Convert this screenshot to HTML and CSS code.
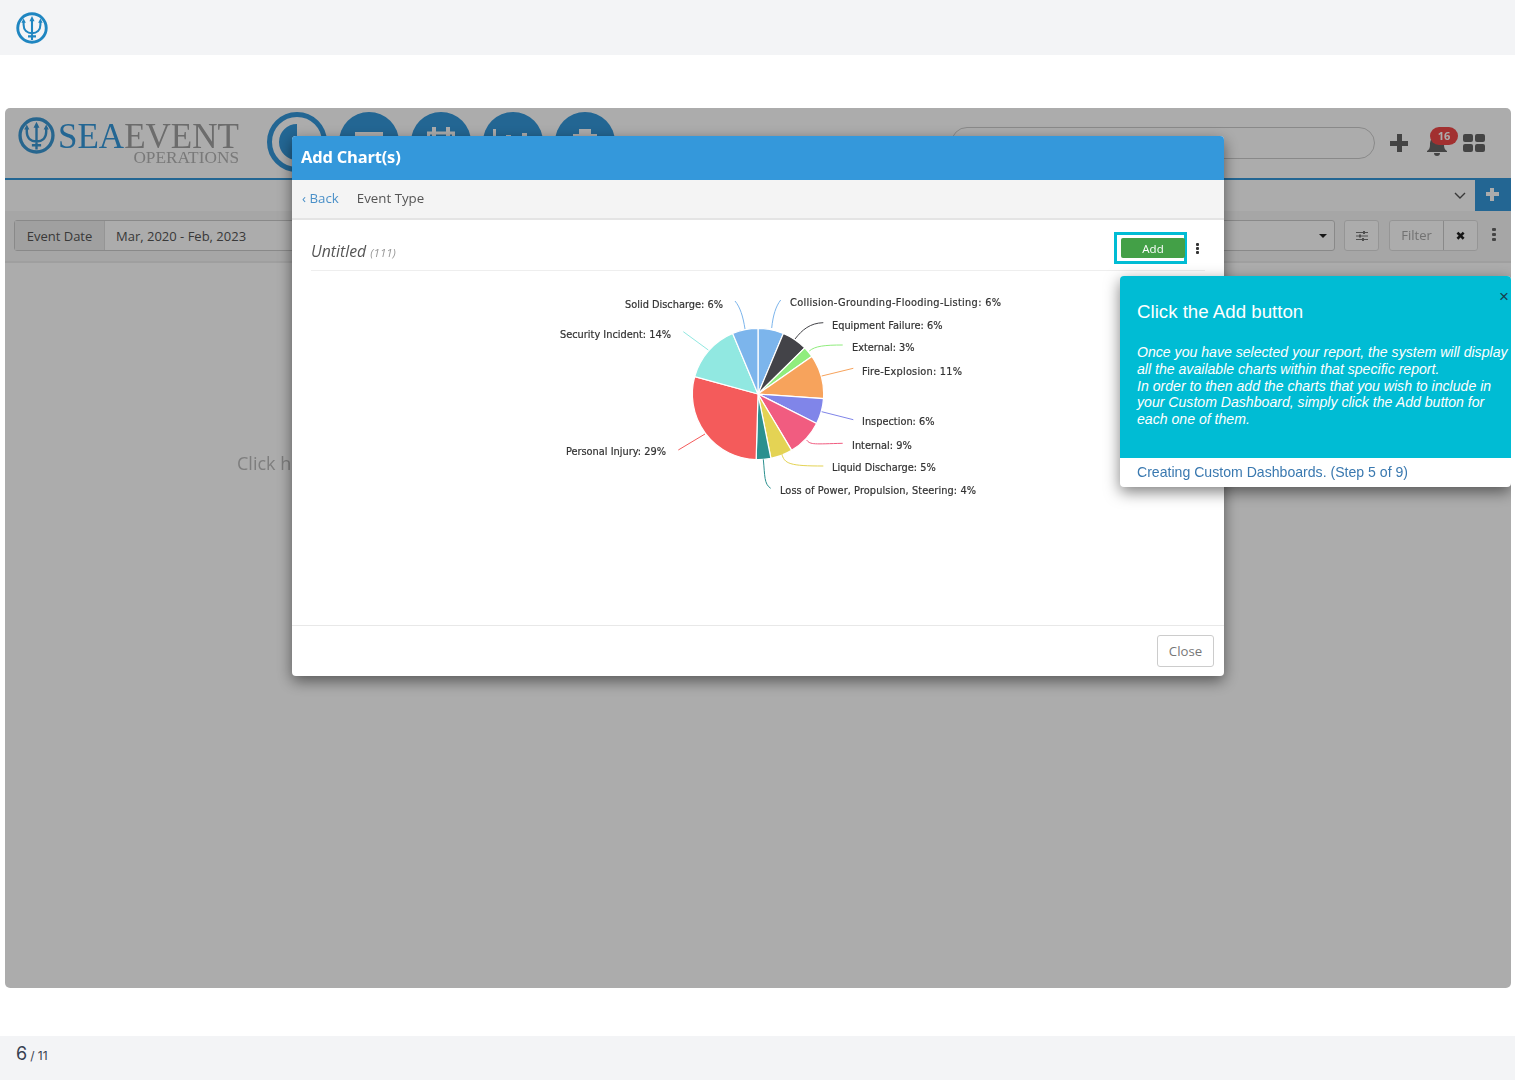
FILE: index.html
```html
<!DOCTYPE html>
<html lang="en">
<head>
    <meta charset="UTF-8">
    <meta name="viewport" content="width=device-width, initial-scale=1.0">
    <title>Creating Custom Dashboards</title>
    <link rel="stylesheet" href="styles.css">
</head>
<body>
    <svg class="defs" width="0" height="0">
        <symbol id="trident" viewBox="0 0 40 40">
            <circle cx="20" cy="20" r="17.800" fill="none" stroke="currentColor" stroke-width="3.600"/>
            <path d="M9.500 12v4c0 7 4.500 10.500 10.500 10.500S30.500 23 30.500 16v-4M20 9v26M15 30.500h10" fill="none" stroke="currentColor" stroke-width="2.600"/>
            <path d="M20 5l3.200 6.500h-6.400zM9.500 8l2.800 5.500H6.700zM30.500 8l2.800 5.500h-5.600z" fill="currentColor"/>
        </symbol>
    </svg>

    <header class="top-bar">
        <svg class="top-logo"><use href="#trident"/></svg>
    </header>

    <main class="stage">
        <div class="frame">
            <div class="app-header">
                <div class="brand">
                    <svg class="brand-mark"><use href="#trident"/></svg>
                    <div class="brand-text">
                        <div class="brand-name"><span class="sea">SEA</span>EVENT</div>
                        <div class="brand-sub">OPERATIONS</div>
                    </div>
                </div>
                <nav class="nav-icons">
                    <svg class="nav-icon" viewBox="0 0 60 60">
                        <circle cx="30" cy="30" r="27.500" fill="none" stroke="#3498db" stroke-width="5"/>
                        <path d="M30 12a18 18 0 1 0 18 18H30z" fill="#3498db"/>
                    </svg>
                    <svg class="nav-icon" viewBox="0 0 60 60">
                        <circle cx="30" cy="30" r="30" fill="#3498db"/>
                        <rect x="16" y="20" width="28" height="24" fill="#fff"/>
                    </svg>
                    <svg class="nav-icon" viewBox="0 0 60 60">
                        <circle cx="30" cy="30" r="30" fill="#3498db"/>
                        <path d="M17.500 21h25v20h-25z" fill="none" stroke="#fff" stroke-width="3"/>
                        <path d="M21 15h4v9h-4zM35 15h4v9h-4z" fill="#fff"/>
                    </svg>
                    <svg class="nav-icon" viewBox="0 0 60 60">
                        <circle cx="30" cy="30" r="30" fill="#3498db"/>
                        <path d="M10 17h3v26h-3zM23 23h5v20h-5zM39 21h5v22h-5z" fill="#fff"/>
                    </svg>
                    <svg class="nav-icon" viewBox="0 0 60 60">
                        <circle cx="30" cy="30" r="30" fill="#3498db"/>
                        <path d="M24 17h12v5h6v22H18V22h6z" fill="#fff"/>
                    </svg>
                </nav>
                <div class="header-search"></div>
                <div class="header-tools">
                    <span class="tool-plus"></span>
                    <span class="tool-bell">
                        <svg viewBox="0 0 24 24" width="24" height="24"><path d="M12 2a2 2 0 0 1 2 2c4 1 5 4 5 8 0 3 1 5 3 6v1H2v-1c2-1 3-3 3-6 0-4 1-7 5-8a2 2 0 0 1 2-2zM9 20h6a3 3 0 0 1-6 0z" fill="#666"/></svg>
                        <span class="badge">16</span>
                    </span>
                    <span class="tool-grid"><i></i><i></i><i></i><i></i></span>
                </div>
            </div>

            <div class="tab-row">
                <svg class="chevron" viewBox="0 0 12 8" width="12" height="8"><path d="M1 1l5 5 5-5" fill="none" stroke="#555" stroke-width="1.400"/></svg>
                <div class="tab-add"><span class="tab-add-plus"></span></div>
            </div>

            <div class="filter-row">
                <div class="date-group">
                    <span class="date-label">Event Date</span>
                    <span class="date-value">Mar, 2020 - Feb, 2023</span>
                    <span class="caret"></span>
                </div>
                <div class="sliders-btn">
                    <svg viewBox="0 0 12 12" width="12" height="12"><path d="M0 2.500h12M0 6h12M0 9.500h12" stroke="#777" stroke-width="1"/><path d="M7 1h2v3H7zM3 4.500h2v3H3zM6 8h2v3H6z" fill="#777"/></svg>
                </div>
                <div class="filter-group">
                    <span class="filter-input">Filter</span>
                    <span class="filter-clear">&#10006;</span>
                </div>
                <div class="kebab kebab-dim"><i></i><i></i><i></i></div>
            </div>

            <div class="dash-body">Click here to add charts</div>

            <div class="backdrop"></div>

            <section class="modal">
                <div class="modal-title">Add Chart(s)</div>
                <div class="crumbs">
                    <a class="back" href="#">&lsaquo; Back</a>
                    <span class="crumb-name">Event Type</span>
                </div>
                <div class="chart-head">
                    <div class="chart-name">Untitled <small>(111)</small></div>
                    <div class="add-highlight"><button class="add-btn">Add</button></div>
                    <div class="kebab"><i></i><i></i><i></i></div>
                </div>
                <svg class="pie" viewBox="292 271 932 354">
                    <g transform="translate(758 394) scale(1.010)" stroke="#fff" stroke-width="1.200">
                        <path d="M0 0V-65A65 65 0 0 1 25.090 -59.970Z" fill="#7cb5ec"/>
                        <path d="M0 0L25.090 -59.970A65 65 0 0 1 46.280 -45.640Z" fill="#434348"/>
                        <path d="M0 0L46.280 -45.640A65 65 0 0 1 53.330 -37.160Z" fill="#90ed7d"/>
                        <path d="M0 0L53.330 -37.160A65 65 0 0 1 64.840 4.590Z" fill="#f7a35c"/>
                        <path d="M0 0L64.840 4.590A65 65 0 0 1 58.040 29.260Z" fill="#8085e9"/>
                        <path d="M0 0L58.040 29.260A65 65 0 0 1 33.290 55.830Z" fill="#f15c80"/>
                        <path d="M0 0L33.290 55.830A65 65 0 0 1 12.790 63.730Z" fill="#e4d354"/>
                        <path d="M0 0L12.790 63.730A65 65 0 0 1 -1.840 64.970Z" fill="#2b908f"/>
                        <path d="M0 0L-1.840 64.970A65 65 0 0 1 -62.670 -17.270Z" fill="#f45b5b"/>
                        <path d="M0 0L-62.670 -17.270A65 65 0 0 1 -25.090 -59.970Z" fill="#91e8e1"/>
                        <path d="M0 0L-25.090 -59.970A65 65 0 0 1 0 -65Z" fill="#7cb5ec"/>
                    </g>
                    <g fill="none" stroke-width="1">
                        <path d="M771.700 328C773 315 776 306 780.700 300" stroke="#7cb5ec"/>
                        <path d="M795 339C802 330 810 323 823.300 322.700" stroke="#434348"/>
                        <path d="M809.300 351C815 346 825 345 842.700 345" stroke="#90ed7d"/>
                        <path d="M821.700 376L853.300 368.300" stroke="#f7a35c"/>
                        <path d="M821.700 411.700L853.300 419.700" stroke="#8085e9"/>
                        <path d="M806.700 440C810 445 815 444 842.700 443.300" stroke="#f15c80"/>
                        <path d="M781.700 453.300C784 464 790 466 823.300 466" stroke="#e4d354"/>
                        <path d="M763.300 459.300C765 476 764 484 770.700 488.300" stroke="#2b908f"/>
                        <path d="M705 434L678.300 450" stroke="#f45b5b"/>
                        <path d="M708.300 350L683.300 331.700" stroke="#91e8e1"/>
                        <path d="M745 329C743 316 740 307 735 301" stroke="#7cb5ec"/>
                    </g>
                    <g class="pie-labels">
                        <text x="790" y="306" textLength="211">Collision-Grounding-Flooding-Listing: 6%</text>
                        <text x="832" y="328.500">Equipment Failure: 6%</text>
                        <text x="852" y="350.500">External: 3%</text>
                        <text x="862" y="374.500" textLength="100">Fire-Explosion: 11%</text>
                        <text x="862" y="424.500">Inspection: 6%</text>
                        <text x="852" y="448.500">Internal: 9%</text>
                        <text x="832" y="470.500">Liquid Discharge: 5%</text>
                        <text x="780" y="493.500" textLength="196">Loss of Power, Propulsion, Steering: 4%</text>
                        <text class="end" x="666" y="455">Personal Injury: 29%</text>
                        <text class="end" x="671" y="337.500">Security Incident: 14%</text>
                        <text class="end" x="723" y="307.500">Solid Discharge: 6%</text>
                    </g>
                </svg>
                <div class="modal-foot">
                    <button class="close-btn">Close</button>
                </div>
            </section>

            <aside class="tour">
                <div class="tour-main">
                    <span class="tour-close">&times;</span>
                    <h3>Click the Add button</h3>
                    <p>Once you have selected your report, the system will display all the available charts within that specific report.<br>In order to then add the charts that you wish to include in your Custom Dashboard, simply click the Add button for each one of them.</p>
                </div>
                <div class="tour-foot">Creating Custom Dashboards. (Step 5 of 9)</div>
            </aside>
        </div>
    </main>

    <footer class="page-foot">
        <span class="page-num">6</span>
        <span class="page-total">/ 11</span>
    </footer>
</body>
</html>
```

FILE: styles.css
```css
/* Global Styles */
* {
    box-sizing: border-box;
}

body {
    margin: 0;
    height: 1080px;
    display: flex;
    flex-direction: column;
    background-color: #fff;
    font-family: "Open Sans", sans-serif;
    overflow: hidden;
}

.defs {
    position: absolute;
}

/* Page bars */
.top-bar {
    height: 55px;
    flex: none;
    display: flex;
    align-items: center;
    padding-left: 16px;
    background-color: #f3f4f6;
}

.top-logo {
    width: 32px;
    height: 32px;
    color: #1f86c1;
}

.stage {
    flex: 1;
    padding: 53px 4px 48px 5px;
}

.page-foot {
    height: 44px;
    flex: none;
    display: flex;
    align-items: baseline;
    gap: 3px;
    padding: 7px 16px 0;
    background-color: #f3f4f6;
    color: #374151;
    font-family: Inter, sans-serif;
}

.page-num {
    font-size: 18px;
}

.page-total {
    font-size: 12px;
}

/* Screenshot frame */
.frame {
    position: relative;
    height: 880px;
    display: flex;
    flex-direction: column;
    border-radius: 5px;
    overflow: hidden;
    background-color: #fff;
    filter: blur(0.4px);
}

.backdrop {
    position: absolute;
    inset: 0;
    background: rgba(0, 0, 0, 0.325);
}

/* App header */
.app-header {
    height: 72px;
    flex: none;
    display: flex;
    align-items: flex-start;
    padding-left: 13px;
    border-bottom: 2px solid #3498db;
}

.brand {
    width: 249px;
    display: flex;
    align-items: flex-start;
    padding-top: 9px;
    color: #3498db;
}

.brand-mark {
    width: 37px;
    height: 37px;
    color: #3b97d3;
}

.brand-text {
    margin: 6px 0 0 3px;
    width: 181px;
    font-family: "Liberation Serif", serif;
    color: #a0a0a0;
}

.brand-name {
    height: 28px;
    font-size: 35px;
    line-height: 28px;
    white-space: nowrap;
}

.sea {
    color: #3498db;
}

.brand-sub {
    height: 13px;
    text-align: right;
    font-size: 17.300px;
    line-height: 13px;
    color: #b4b4b4;
}

.nav-icons {
    display: flex;
    gap: 12px;
    padding-top: 4px;
}

.nav-icon {
    width: 60px;
    height: 60px;
}

.header-search {
    width: 424px;
    height: 32px;
    margin: 19px 0 0 auto;
    border: 1px solid #ccc;
    border-radius: 16px;
}

.header-tools {
    display: flex;
    align-items: center;
    height: 32px;
    margin-top: 19px;
    padding: 0 26px 0 15px;
}

.tool-plus {
    width: 18px;
    height: 18px;
    background:
        linear-gradient(#666, #666) center / 18px 5px no-repeat,
        linear-gradient(#666, #666) center / 5px 18px no-repeat;
}

.tool-bell {
    position: relative;
    width: 24px;
    height: 24px;
    margin-left: 17px;
    margin-top: 4px;
}

.badge {
    position: absolute;
    top: -6px;
    left: 5px;
    width: 28px;
    height: 18px;
    border-radius: 9px;
    background-color: #f04848;
    color: #fff;
    font-size: 11px;
    font-weight: 700;
    line-height: 18px;
    text-align: center;
}

.tool-grid {
    display: grid;
    grid-template-columns: 10px 10px;
    gap: 2px;
    margin-left: 14px;
}

.tool-grid i {
    height: 8px;
    border-radius: 2px;
    background-color: #666;
}

/* Tabs and filters */
.tab-row {
    height: 31px;
    flex: none;
    display: flex;
    align-items: center;
    justify-content: flex-end;
}

.chevron {
    margin-right: 9px;
}

.tab-add {
    width: 36px;
    height: 31px;
    display: flex;
    align-items: center;
    justify-content: center;
    padding: 0 2px 3px 0;
    background-color: #3498db;
}

.tab-add-plus {
    width: 13px;
    height: 13px;
    background:
        linear-gradient(#fff, #fff) center / 13px 4px no-repeat,
        linear-gradient(#fff, #fff) center / 4px 13px no-repeat;
}

.filter-row {
    height: 52px;
    flex: none;
    display: flex;
    align-items: flex-start;
    padding: 9px 0 0 9px;
    background-color: #f7f7f7;
    border-bottom: 2px solid #ececec;
    font-size: 13px;
    color: #555;
}

.date-group {
    flex: 1;
    height: 31px;
    display: flex;
    align-items: center;
    margin-right: 9px;
    background-color: #fff;
    border: 1px solid #ccc;
    border-radius: 3px;
}

.date-label {
    width: 90px;
    height: 100%;
    display: flex;
    align-items: center;
    justify-content: center;
    background-color: #eee;
    border-right: 1px solid #ddd;
    font-size: 13px;
}

.date-value {
    flex: 1;
    padding-left: 11px;
}

.caret {
    margin-right: 7px;
    border-top: 4px solid #222;
    border-left: 4px solid transparent;
    border-right: 4px solid transparent;
}

.sliders-btn {
    width: 35px;
    height: 31px;
    display: flex;
    align-items: center;
    justify-content: center;
    margin-right: 10px;
    background-color: #fff;
    border: 1px solid #ddd;
    border-radius: 3px;
}

.filter-group {
    display: flex;
    height: 31px;
    border: 1px solid #ddd;
    border-radius: 3px;
    background-color: #fff;
}

.filter-input {
    width: 53px;
    line-height: 28px;
    text-align: center;
    color: #aaa;
}

.filter-clear {
    width: 34px;
    line-height: 30px;
    text-align: center;
    border-left: 1px solid #ccc;
    color: #222;
    font-family: "DejaVu Sans", sans-serif;
    font-size: 12px;
}

.kebab {
    width: 16px;
    display: flex;
    flex-direction: column;
    align-items: center;
    gap: 2px;
}

.kebab i {
    width: 3px;
    height: 3px;
    background-color: #333;
    border-radius: 1px;
}

.kebab-dim {
    margin: 8px 9px 0 8px;
}

.kebab-dim i {
    width: 4px;
    background-color: #666;
}

.dash-body {
    flex: 1;
    padding: 188px 0 0 232px;
    font-size: 18px;
    color: #bbb;
    white-space: nowrap;
}

/* Modal */
.modal {
    position: absolute;
    top: 28px;
    left: 287px;
    width: 932px;
    height: 540px;
    display: flex;
    flex-direction: column;
    background-color: #fff;
    border-radius: 4px;
    box-shadow: 0 5px 15px rgba(0, 0, 0, 0.5);
}

.modal-title {
    height: 44px;
    flex: none;
    padding: 0 9px;
    background-color: #3498db;
    border-radius: 4px 4px 0 0;
    color: #fff;
    font-size: 16.500px;
    font-weight: 700;
    letter-spacing: -0.2px;
    line-height: 42px;
}

.crumbs {
    height: 40px;
    flex: none;
    display: flex;
    align-items: center;
    gap: 18px;
    padding: 0 10px 2px;
    background-color: #f4f4f4;
    border-bottom: 2px solid #e4e4e4;
    font-size: 13.300px;
    color: #555;
}

.back {
    color: #4a90c8;
    text-decoration: none;
}

.chart-head {
    height: 51px;
    flex: none;
    display: flex;
    align-items: flex-start;
    margin: 0 19px;
    padding-top: 12px;
    border-bottom: 1px solid #eee;
}

.chart-name {
    flex: 1;
    padding-top: 8px;
    font-size: 15.800px;
    font-style: italic;
    color: #555;
}

.chart-name small {
    font-size: 11.500px;
    color: #999;
}

.add-highlight {
    width: 73px;
    height: 32px;
    padding: 3px;
    margin-right: 2px;
    border: 3px solid #00bcd4;
}

.add-btn {
    display: block;
    width: 64px;
    height: 20px;
    margin-left: 1px;
    padding: 0;
    border: none;
    border-radius: 2px;
    background-color: #43a047;
    color: #fff;
    font-family: "Open Sans", sans-serif;
    font-size: 11.500px;
}

.chart-head .kebab {
    padding-top: 11px;
    gap: 1px;
}

.pie {
    flex: 1;
    display: block;
    width: 100%;
    min-height: 0;
}

.pie-labels {
    font-family: "DejaVu Sans", sans-serif;
    font-size: 9.800px;
    fill: #333;
    stroke: #333;
    stroke-width: 0.2px;
}

.pie-labels .end {
    text-anchor: end;
}

.modal-foot {
    height: 51px;
    flex: none;
    display: flex;
    justify-content: flex-end;
    align-items: center;
    padding-right: 10px;
    border-top: 1px solid #e8e8e8;
}

.close-btn {
    width: 57px;
    height: 32px;
    padding: 0;
    background-color: #fff;
    border: 1px solid #ccc;
    border-radius: 3px;
    color: #777;
    font-family: "Open Sans", sans-serif;
    font-size: 13.200px;
}

/* Tour popover */
.tour {
    position: absolute;
    top: 168px;
    left: 1115px;
    width: 391px;
    height: 211px;
    display: flex;
    flex-direction: column;
    border-radius: 4px;
    background-color: #fff;
    box-shadow: 0 5px 15px rgba(0, 0, 0, 0.5);
    font-family: "Liberation Sans", Arial, sans-serif;
}

.tour-main {
    position: relative;
    height: 182px;
    padding: 26px 0 0 17px;
    background-color: #00bcd4;
    border-radius: 4px 4px 0 0;
    color: #fff;
}

.tour-main h3 {
    margin: 0 0 22px;
    font-size: 18.700px;
    font-weight: 400;
    line-height: 20px;
}

.tour-main p {
    margin: 0;
    font-size: 14.100px;
    font-style: italic;
    line-height: 16.800px;
}

.tour-close {
    position: absolute;
    top: 12px;
    right: 2px;
    font-size: 17px;
    line-height: 18px;
    color: #17414d;
}

.tour-foot {
    padding: 5px 17px;
    font-size: 14.100px;
    line-height: 18px;
    color: #3a79b0;
}
```
